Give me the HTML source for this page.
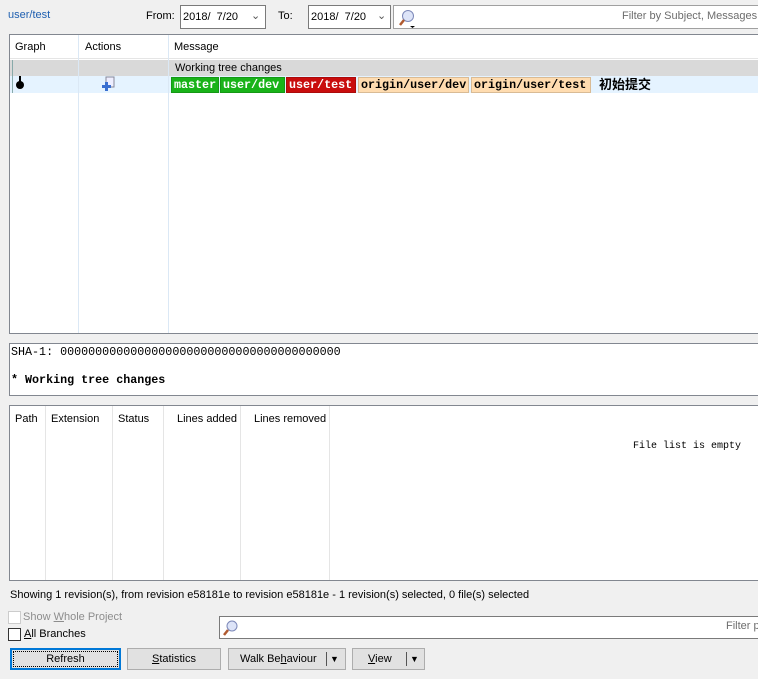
<!DOCTYPE html><html><head><style>
*{box-sizing:border-box}body{margin:0;width:758px;height:679px;background:#f0f0f0;font-family:"Liberation Sans",sans-serif;font-size:11px;color:#000;position:relative;overflow:hidden}
.a{position:absolute;white-space:nowrap}
.box{position:absolute;background:#fff;border:1px solid #a0a0a0}
.mono{font-family:"Liberation Mono",monospace;font-size:11.7px}
.tag{position:absolute;top:77px;height:16px;font-family:"Liberation Mono",monospace;font-weight:bold;font-size:11.7px;line-height:15px;padding-left:2px;border:1px solid rgba(0,0,0,.15)}
.btn{position:absolute;top:648px;height:22px;background:#e1e1e1;border:1px solid #adadad;text-align:center;line-height:20px}
.vl{position:absolute;width:1px;background:#dbe8f5}
.cb{position:absolute;width:13px;height:13px;border:1px solid #333;background:#fff}
</style></head><body>
<div class="a" style="left:8px;top:9px;color:#1e5fb0">user/test</div>
<div class="a" style="left:146px;top:10px">From:</div>
<div class="box" style="left:180px;top:5px;width:86px;height:24px;border-color:#7a7a7a"><span class="a" style="left:2px;top:5px">2018/&nbsp; 7/20</span><span class="a" style="left:70px;top:3px;color:#555">⌄</span></div>
<div class="a" style="left:278px;top:10px">To:</div>
<div class="box" style="left:308px;top:5px;width:83px;height:24px;border-color:#7a7a7a"><span class="a" style="left:2px;top:5px">2018/&nbsp; 7/20</span><span class="a" style="left:68px;top:3px;color:#555">⌄</span></div>
<div class="box" style="left:393px;top:5px;width:370px;height:24px"><svg class="a" style="left:3px;top:2px" width="20" height="20"><circle cx="11" cy="8" r="5.5" fill="#dde4f8" stroke="#7c88b8"/><line x1="7" y1="12" x2="3" y2="17" stroke="#b05a30" stroke-width="2.5"/><path d="M13 18h5l-2.5 2z" fill="#000"/></svg><span class="a" style="left:228px;top:4px;color:#6d6d6d">Filter by Subject, Messages,</span></div>

<div class="box" style="left:9px;top:34px;width:755px;height:300px;border-color:#828790"></div>
<div class="a" style="left:10px;top:58px;width:748px;height:1px;background:#e5e5e5"></div>
<div class="a" style="left:10px;top:60px;width:748px;height:16px;background:#d9d9d9"></div>
<div class="a" style="left:10px;top:76px;width:748px;height:17px;background:#e5f3ff"></div>
<div class="vl" style="left:78px;top:35px;height:298px"></div>
<div class="vl" style="left:168px;top:35px;height:298px"></div>
<div class="a" style="left:12px;top:60px;width:1px;height:33px;background:#8aa"></div>
<div class="a" style="left:15px;top:41px">Graph</div>
<div class="a" style="left:85px;top:41px">Actions</div>
<div class="a" style="left:174px;top:41px">Message</div>
<div class="a" style="left:175px;top:62px">Working tree changes</div>
<div class="a" style="left:19px;top:76px;width:2px;height:8px;background:#000"></div>
<div class="a" style="left:16px;top:81px;width:8px;height:8px;border-radius:50%;background:#000"></div>
<svg class="a" style="left:100px;top:76px" width="16" height="16"><rect x="6" y="1" width="8" height="10" fill="#eef" stroke="#889"/><path d="M5 6v3H2v3h3v3h3v-3h3V9H8V6z" fill="#3a6fd0"/></svg>
<div class="tag" style="left:171px;width:48px;background:#19b319;color:#fff">master</div>
<div class="tag" style="left:220px;width:65px;background:#19b319;color:#fff">user/dev</div>
<div class="tag" style="left:286px;width:70px;background:#c90d0d;color:#fff">user/test</div>
<div class="tag" style="left:358px;width:111px;background:#ffdcb0">origin/user/dev</div>
<div class="tag" style="left:471px;width:120px;background:#ffdcb0">origin/user/test</div>
<div class="a" style="left:599px;top:76px;font-weight:bold;font-family:'Noto Sans CJK SC',sans-serif;font-size:13px;line-height:16px">初始提交</div>

<div class="box" style="left:9px;top:343px;width:755px;height:53px;border-color:#828790"></div>
<div class="a mono" style="left:11px;top:345px">SHA-1: 0000000000000000000000000000000000000000</div>
<div class="a mono" style="left:11px;top:373px;font-weight:bold">* Working tree changes</div>

<div class="box" style="left:9px;top:405px;width:755px;height:176px;border-color:#828790"></div>
<div class="vl" style="left:45px;top:406px;height:174px;background:#e5e5e5"></div>
<div class="vl" style="left:112px;top:406px;height:174px;background:#e5e5e5"></div>
<div class="vl" style="left:163px;top:406px;height:174px;background:#e5e5e5"></div>
<div class="vl" style="left:240px;top:406px;height:174px;background:#e5e5e5"></div>
<div class="vl" style="left:329px;top:406px;height:174px;background:#e5e5e5"></div>
<div class="a" style="left:15px;top:413px">Path</div>
<div class="a" style="left:51px;top:413px">Extension</div>
<div class="a" style="left:118px;top:413px">Status</div>
<div class="a" style="left:177px;top:413px">Lines added</div>
<div class="a" style="left:254px;top:413px">Lines removed</div>
<div class="a mono" style="left:633px;top:441px;font-size:10px">File list is empty</div>

<div class="a" style="left:10px;top:589px">Showing 1 revision(s), from revision e58181e to revision e58181e - 1 revision(s) selected, 0 file(s) selected</div>
<div class="cb" style="left:8px;top:611px;border-color:#ccc"></div>
<div class="a" style="left:23px;top:611px;color:#8d8d8d">Show <u>W</u>hole Project</div>
<div class="cb" style="left:8px;top:628px"></div>
<div class="a" style="left:24px;top:628px"><u>A</u>ll Branches</div>
<div class="box" style="left:219px;top:616px;width:545px;height:23px;border-color:#7a7a7a"><svg class="a" style="left:2px;top:2px" width="18" height="18"><circle cx="10" cy="7" r="5" fill="#dde4f8" stroke="#7c88b8"/><line x1="6" y1="11" x2="2" y2="16" stroke="#b05a30" stroke-width="2.5"/></svg><span class="a" style="left:506px;top:3px;color:#6d6d6d">Filter p</span></div>
<div class="btn" style="left:10px;width:111px;border:2px solid #0078d7;padding:1px"><div style="border:1px dotted #000;height:16px;line-height:14px">Refresh</div></div>
<div class="btn" style="left:127px;width:94px"><u>S</u>tatistics</div>
<div class="btn" style="left:228px;width:118px;text-align:left;padding-left:11px">Walk Be<u>h</u>aviour<span class="a" style="left:97px;top:3px;width:1px;height:14px;background:#555"></span><span class="a" style="left:101px;top:0;font-size:9px">▼</span></div>
<div class="btn" style="left:352px;width:73px;text-align:left;padding-left:15px"><u>V</u>iew<span class="a" style="left:53px;top:3px;width:1px;height:14px;background:#555"></span><span class="a" style="left:57px;top:0;font-size:9px">▼</span></div>
</body></html>
